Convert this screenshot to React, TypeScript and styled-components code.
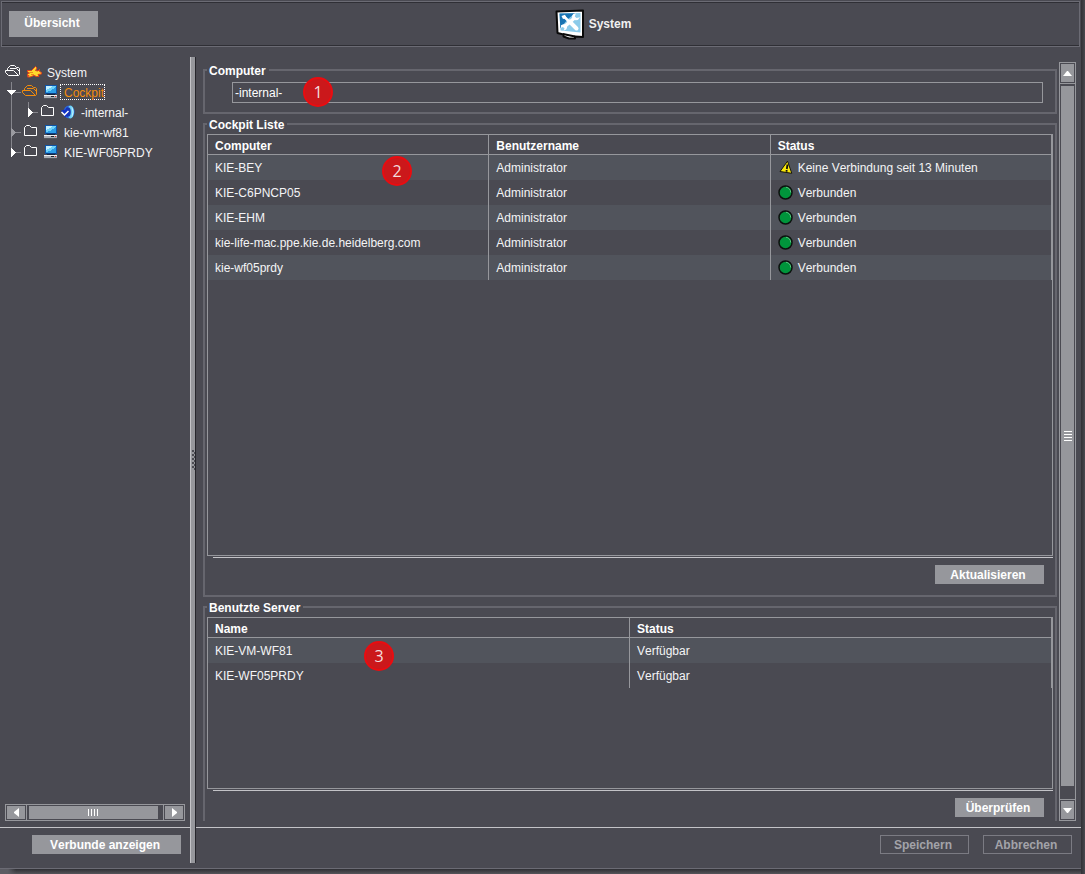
import React from 'react';
import styled, { createGlobalStyle, css } from 'styled-components';

const color = {
  bg: '#4a4a52',
  stripe: '#51545c',
  frame: '#6b6b74',
  line: '#96979c',
  face: '#96979c',
  rule: '#c3c3c7',
  dark: '#2f2f35',
  text: '#ffffff',
  cell: '#f4f4f6',
  active: '#f28c0c',
};

const GlobalStyle = createGlobalStyle`
  *, *::before, *::after { box-sizing: border-box; }
  body {
    margin: 0;
    background: ${color.bg};
    color: ${color.text};
    font: 12px/16px "Liberation Sans", Arial, sans-serif;
    font-kerning: none;
  }
  button, input { font: inherit; color: inherit; }
`;

/* ---------- window frame ---------- */

const Desktop = styled.div`
  display: flex;
  flex-direction: column;
  min-height: 100vh;
  padding-right: 4px;
  background: linear-gradient(to left, #4a4a50 0, #303035 4px, ${color.bg} 4px);
`;

const Header = styled.header`
  display: flex;
  align-items: center;
  gap: 16px;
  height: 46px;
  margin: 1px 1px 0 1px;
  border: 1px solid ${color.frame};
  box-shadow: inset 0 1px 0 ${color.dark}, inset 0 -1px 0 ${color.dark};
  padding: 0 7px;
`;

const Title = styled.h1`
  display: flex;
  align-items: center;
  gap: 4px;
  margin: 0 auto;
  font-size: 12px;
  line-height: 16px;
  color: #f0f0f0;
`;

const Main = styled.main`
  display: flex;
  flex: 1;
`;

const WindowEdge = styled.div`
  height: 6px;
  border-top: 1px solid ${color.frame};
  background: linear-gradient(to right, #5c5c63 8px, transparent 16px),
    linear-gradient(#2f2f34, #55555a);
`;

/* ---------- buttons ---------- */

const Button = styled.button<{ $width: number; $tall?: boolean }>`
  display: block;
  width: ${(p) => p.$width}px;
  height: ${(p) => (p.$tall ? 26 : 19)}px;
  padding: 0 3px 0 0;
  border: 0;
  background: ${color.face};
  color: ${color.text};
  font-weight: bold;
  line-height: 16px;
  ${(p) => p.$tall && 'padding-bottom: 2px;'}

  &:disabled {
    border: 1px solid #7b7b83;
    background: transparent;
    color: #a3a3a9;
  }
`;

/* ---------- left column ---------- */

const Sidebar = styled.aside`
  display: flex;
  flex-direction: column;
  flex: 0 0 190px;
`;

const Tree = styled.div`
  flex: 1;
  padding-top: 15px;
`;

const TreeRow = styled.div<{ $root?: boolean; $active?: boolean }>`
  display: flex;
  align-items: center;
  height: 20px;
  padding-left: ${(p) => (p.$root ? 5 : 0)}px;
  color: ${(p) => (p.$active ? color.active : color.cell)};
`;

const FolderSvg = styled.svg`
  flex: none;
  margin-right: 6px;
`;

const NodeSvg = styled.svg`
  flex: none;
  margin-right: 5px;
`;

const TreeLabel = styled.span<{ $active?: boolean }>`
  height: 16px;
  padding-top: 1px;
  line-height: 16px;
  ${(p) =>
    p.$active &&
    css`
      margin-left: -4px;
      padding: 0 0 0 3px;
      border: 1px dotted #fff;
    `}
`;

const Splitter = styled.div`
  display: flex;
  align-items: center;
  flex: 0 0 6px;
  margin: 10px 0 5px;
  border-left: 1px solid ${color.rule};
  border-right: 1px solid #26262c;
  background: ${color.face};
`;

/* ---------- scroll bars ---------- */

const ScrollBar = styled.div<{ $horizontal?: boolean }>`
  display: flex;
  flex-direction: ${(p) => (p.$horizontal ? 'row' : 'column')};
  border: 1px solid ${color.line};
  ${(p) =>
    p.$horizontal
      ? css`
          height: 17px;
          margin: 0 5px 6px;
        `
      : css`
          flex: 0 0 17px;
        `}
`;

const ScrollButton = styled.button`
  display: flex;
  align-items: center;
  justify-content: center;
  flex: 0 0 20px;
  margin: 0;
  padding: 0;
  border: 1px solid ${color.bg};
  background: ${color.face};
`;

const ScrollTrack = styled.div<{ $horizontal?: boolean }>`
  display: flex;
  flex: 1;
  ${(p) =>
    p.$horizontal
      ? css`
          border: solid ${color.line};
          border-width: 0 1px;
          padding: 1px 5px 1px 2px;
        `
      : css`
          border: solid ${color.line};
          border-width: 1px 0;
          padding: 2px 1px 13px;
        `}
`;

const ScrollThumb = styled.div`
  display: flex;
  align-items: center;
  justify-content: center;
  flex: 1;
  background: ${color.face};
`;

/* ---------- right column ---------- */

const Content = styled.section`
  display: flex;
  flex-direction: column;
  flex: 1;
  min-width: 0;
`;

const Viewport = styled.div`
  display: flex;
  flex: 1;
  gap: 2px;
  padding: 15px 5px 6px 7px;
`;

const Panels = styled.div`
  display: flex;
  flex-direction: column;
  flex: 1;
  gap: 2px;
  min-width: 0;
`;

const Group = styled.fieldset<{ $grow?: boolean; $open?: boolean }>`
  display: flex;
  flex-direction: column;
  flex: ${(p) => (p.$grow ? '1 0 auto' : 'none')};
  min-width: 0;
  margin: 0;
  padding: 2px 2px ${(p) => (p.$open ? 4 : 11)}px;
  border: 2px solid #66666e;
  ${(p) => p.$open && 'border-bottom: 0;'}
`;

const GroupTitle = styled.legend`
  padding: 2px 3px 0 2px;
  font-weight: bold;
  line-height: 14px;
`;

const Field = styled.div`
  position: relative;
  margin: 2px 10px -2px 25px;
`;

const TextBox = styled.input`
  display: block;
  width: 100%;
  height: 21px;
  padding: 0 2px;
  border: 1px solid ${color.line};
  outline: 0;
  background: transparent;
`;

const TableBox = styled.div<{ $grow?: boolean }>`
  ${(p) => (p.$grow ? 'flex: 1 0 180px;' : 'height: 172px;')}
  margin-bottom: 1px;
  border: 1px solid ${color.line};
`;

const Table = styled.table`
  width: 100%;
  table-layout: fixed;
  border-spacing: 0;
`;

const HeadCell = styled.th`
  height: 20px;
  padding: 3px 7px 0;
  border: solid ${color.line};
  border-width: 0 1px 1px 0;
  text-align: left;
`;

const Row = styled.tr`
  &:nth-child(odd) {
    background: ${color.stripe};
  }
`;

const Cell = styled.td`
  position: relative;
  height: 25px;
  padding: 0 7px;
  border-right: 1px solid ${color.line};
  color: ${color.cell};
  white-space: nowrap;
`;

const StatusLine = styled.div`
  display: flex;
  align-items: center;
  gap: 5px;
`;

const Rule = styled.div`
  height: 1px;
  margin-left: 6px;
  background: ${color.rule};
`;

const GroupActions = styled.div`
  display: flex;
  justify-content: flex-end;
  padding: 7px 9px 0 0;
`;

const Footer = styled.footer`
  display: flex;
  justify-content: flex-end;
  gap: 14px;
  padding: 7px 9px 14px;
  border-top: 1px solid ${color.rule};
`;

const Marker = styled.span<{ $left: number; $top: number }>`
  position: absolute;
  left: ${(p) => p.$left}px;
  top: ${(p) => p.$top}px;
  z-index: 1;
  width: 30px;
  height: 30px;
  border: 2px solid #ea0c10;
  border-radius: 50%;
  background: #cb181b;
  color: #f3dede;
  font: 16px/26px "Open Sans", "Noto Sans", sans-serif;
  text-align: center;
`;

/* ---------- drawings ---------- */

const BranchSvg = styled.svg`
  flex: none;
`;

type BranchKind = 'open' | 'child' | 'middle' | 'last';

function Branch({ kind }: { kind: BranchKind }) {
  const child = kind === 'child';
  return (
    <BranchSvg width={child ? 39 : 22} height="20" shapeRendering="crispEdges" aria-hidden="true">
      <path
        d={kind === 'last' ? 'M11.5 0V10' : kind === 'open' ? 'M11.5 -2V20' : 'M11.5 0V20'}
        stroke="#85858c"
      />
      {kind === 'open' && (
        <>
          <path d="M12 10.5H21M28.5 16V20" stroke="#85858c" />
          <path d="M7 8H16V9H15V10H14V11H13V12H12V13H11V12H10V11H9V10H8V9H7Z" fill="#fff" />
        </>
      )}
      {child && (
        <>
          <path d="M28.5 0V10M33 10.5H38" stroke="#85858c" />
          <path d="M28 6V15L33 11V10Z" fill="#fff" />
        </>
      )}
      {(kind === 'middle' || kind === 'last') && (
        <>
          <path d="M16 10.5H21" stroke="#85858c" />
          <path d="M11 6V15L16 11V10Z" fill={kind === 'middle' ? '#9a9aa0' : '#fff'} />
        </>
      )}
    </BranchSvg>
  );
}

function Folder({ open, stroke = '#fff' }: { open?: boolean; stroke?: string }) {
  return (
    <FolderSvg width="16" height="14" viewBox="0 0 16 14" fill="none" stroke={stroke} aria-hidden="true">
      {open ? (
        <path d="M.5 5.500H8.500L13.500 10.500H3.500L.5 7.500ZM2.500 5.500V3.500L5.500 .5H9.500L11.500 2.500H13.500L14.500 3.500V9.500L13.500 10.500M5 3.500H11.500L14 6" />
      ) : (
        <path d="M2.500 10.500V2.500L4.500 .5H7.500L9.500 2.500H14.500V10.500Z" />
      )}
    </FolderSvg>
  );
}

function HandIcon() {
  return (
    <NodeSvg width="15" height="14" viewBox="0 0 15 14" aria-hidden="true">
      <path
        d="M.5 5.500H4.500L8.500 1.500L10 3L8.500 5.500L11 6L12.500 4.500V6.500L14.500 7.500V9L11 9.500L12 11.500H9.500L7 10.500L3 12H.5L2 10.500H.5V9L2.500 8L.5 7Z"
        fill="#ffd92c"
        stroke="#e4411c"
      />
      <path d="M3 7.500H6M4 9.500H7" stroke="#f08a1a" />
    </NodeSvg>
  );
}

function ComputerIcon() {
  return (
    <NodeSvg width="15" height="16" viewBox="0 0 15 16" shapeRendering="crispEdges" aria-hidden="true">
      <path d="M1 1H13V10H1Z" fill="#0f55a8" />
      <path d="M2 2H12V9H2Z" fill="#2c9de6" />
      <path d="M2 2H12L11 4L6 7L2 8Z" fill="#6fd3fa" />
      <path d="M2 2H9L6 4L2 6Z" fill="#c4f0ff" />
      <path d="M2 9H12V10H2Z" fill="#0b3f86" />
      <path d="M3 10H11V11H3Z" fill="#16263f" />
      <path d="M0 11H13V12H0Z" fill="#eef0f2" />
      <path d="M0 12H13V14H0Z" fill="#a9adb4" />
      <path d="M0 14H13V15H0Z" fill="#53575e" />
      <path d="M7 12.500H10" stroke="#22262c" />
      <path d="M11 12.500H12" stroke="#e22222" />
    </NodeSvg>
  );
}

function InternalIcon() {
  return (
    <NodeSvg width="15" height="16" viewBox="0 0 15 16" aria-hidden="true">
      <ellipse cx="8" cy="8" rx="5.500" ry="6.500" fill="#2a63e0" />
      <ellipse cx="9.500" cy="8" rx="3.500" ry="6.500" fill="#6ccff5" />
      <ellipse cx="7" cy="8" rx="2.800" ry="4.800" fill="#1735b0" />
      <path d="M11 3.500Q13 8 11 12.500" stroke="#c8f1ff" fill="none" />
      <path d="M0 6.500L7 5L8 10L4 13.500Z" fill="#1233c4" />
      <path d="M.5 8L3.500 11L7.500 7" stroke="#fff" strokeWidth="1.500" fill="none" />
    </NodeSvg>
  );
}

function SystemIcon() {
  return (
    <svg width="30" height="31" viewBox="0 0 30 31" aria-hidden="true">
      <path
        d="M1.500 2.500L28 1.500V28L20 27.500V29.500H14L8.500 27.500V25.500L2.500 24Z"
        fill="#fff"
        stroke="#0a0a0a"
        strokeWidth="2"
        strokeLinejoin="round"
      />
      <path d="M8 25L20 27.500" stroke="#0a0a0a" strokeWidth="2" />
      <path d="M4.500 4.500L25.500 4V23.500L5.500 21.500Z" fill="#8ccbea" />
      <path d="M4.500 4.500L20 4.200L13 10L5.300 19Z" fill="#1873b2" />
      <path d="M8.500 18.500L19.500 9" stroke="#fff" strokeWidth="3.500" />
      <path
        d="M18.500 4.800Q15.500 8 18.500 10.800Q23 12.500 25 8.200L21.500 9L19.800 7.500L20.800 4.500Z"
        fill="#fff"
      />
      <path d="M6 16.200Q10 13.800 12 17Q12.500 21 8.500 21.500L9.800 19.200L8.500 17.800L6 18.800Z" fill="#fff" />
      <path d="M9 7.500L14 12.500" stroke="#fff" strokeWidth="2.500" />
      <path d="M6.500 7L10 5.800L11.500 9L8 10Z" fill="#fff" />
      <path d="M14.500 12.500L21.500 19.500" stroke="#fff" strokeWidth="4" strokeLinecap="round" />
    </svg>
  );
}

function OkIcon() {
  return (
    <svg width="15" height="15" viewBox="0 0 15 15" aria-hidden="true">
      <circle cx="7.500" cy="7.500" r="6.500" fill="#00953b" stroke="#0c110e" strokeWidth="1.500" />
      <path d="M8 2.200Q12.500 3 12.700 7.500" fill="none" stroke="#5cc283" />
    </svg>
  );
}

function WarnIcon() {
  return (
    <svg width="15" height="15" viewBox="0 0 15 15" aria-hidden="true">
      <path d="M9.500 1.200L13.800 13.300L2 11.500Z" fill="#fbe80a" stroke="#17170c" strokeLinejoin="round" />
      <path d="M9.500 4.500L8.800 9M8.600 10V11.800" stroke="#111" strokeWidth="1.800" />
    </svg>
  );
}

const arrows = {
  up: { w: 9, h: 5, d: 'M0 5L4 0H5L9 5Z' },
  down: { w: 9, h: 5, d: 'M0 0L4 5H5L9 0Z' },
  left: { w: 5, h: 9, d: 'M5 0L0 4V5L5 9Z' },
  right: { w: 5, h: 9, d: 'M0 0L5 4V5L0 9Z' },
};

function Arrow({ to }: { to: keyof typeof arrows }) {
  const a = arrows[to];
  return (
    <svg width={a.w} height={a.h} aria-hidden="true">
      <path d={a.d} fill="#fff" />
    </svg>
  );
}

function SplitterGrip() {
  return (
    <svg width="4" height="20" shapeRendering="crispEdges" aria-hidden="true">
      {[0, 4, 8, 12, 16].map((y) => (
        <path key={y} d={`M1 ${y}h2v2h-2zM3 ${y + 2}h1v2h-1z`} fill="#4a4a51" />
      ))}
    </svg>
  );
}

/* ---------- data ---------- */

const cockpits = [
  { host: 'KIE-BEY', user: 'Administrator', ok: false, status: 'Keine Verbindung seit 13 Minuten' },
  { host: 'KIE-C6PNCP05', user: 'Administrator', ok: true, status: 'Verbunden' },
  { host: 'KIE-EHM', user: 'Administrator', ok: true, status: 'Verbunden' },
  { host: 'kie-life-mac.ppe.kie.de.heidelberg.com', user: 'Administrator', ok: true, status: 'Verbunden' },
  { host: 'kie-wf05prdy', user: 'Administrator', ok: true, status: 'Verbunden' },
];

const servers = [
  { name: 'KIE-VM-WF81', status: 'Verfügbar' },
  { name: 'KIE-WF05PRDY', status: 'Verfügbar' },
];

export default function App() {
  return (
    <>
      <GlobalStyle />
      <Desktop>
        <Header>
          <Button $width={89} $tall>Übersicht</Button>
          <Title>
            <SystemIcon />
            System
          </Title>
        </Header>

        <Main>
          <Sidebar>
            <Tree role="tree" aria-label="System">
              <TreeRow role="treeitem" $root>
                <Folder open />
                <HandIcon />
                <TreeLabel>System</TreeLabel>
              </TreeRow>
              <TreeRow role="treeitem" $active>
                <Branch kind="open" />
                <Folder open stroke={color.active} />
                <ComputerIcon />
                <TreeLabel $active>Cockpit</TreeLabel>
              </TreeRow>
              <TreeRow role="treeitem">
                <Branch kind="child" />
                <Folder />
                <InternalIcon />
                <TreeLabel>-internal-</TreeLabel>
              </TreeRow>
              <TreeRow role="treeitem">
                <Branch kind="middle" />
                <Folder />
                <ComputerIcon />
                <TreeLabel>kie-vm-wf81</TreeLabel>
              </TreeRow>
              <TreeRow role="treeitem">
                <Branch kind="last" />
                <Folder />
                <ComputerIcon />
                <TreeLabel>KIE-WF05PRDY</TreeLabel>
              </TreeRow>
            </Tree>
            <ScrollBar $horizontal>
              <ScrollButton aria-label="Nach links"><Arrow to="left" /></ScrollButton>
              <ScrollTrack $horizontal>
                <ScrollThumb>
                  <svg width="11" height="7" shapeRendering="crispEdges" aria-hidden="true">
                    <path d="M.5 0V7M3.500 0V7M6.500 0V7M9.500 0V7" stroke="#fff" />
                  </svg>
                </ScrollThumb>
              </ScrollTrack>
              <ScrollButton aria-label="Nach rechts"><Arrow to="right" /></ScrollButton>
            </ScrollBar>
            <Footer>
              <Button $width={149}>Verbunde anzeigen</Button>
            </Footer>
          </Sidebar>

          <Splitter>
            <SplitterGrip />
          </Splitter>

          <Content>
            <Viewport>
              <Panels>
                <Group>
                  <GroupTitle id="computer-title">Computer</GroupTitle>
                  <Field>
                    <TextBox aria-labelledby="computer-title" defaultValue="-internal-" />
                    <Marker $left={71} $top={-5}>1</Marker>
                  </Field>
                </Group>

                <Group $grow>
                  <GroupTitle>Cockpit Liste</GroupTitle>
                  <TableBox $grow>
                    <Table>
                      <thead>
                        <tr>
                          <HeadCell>Computer</HeadCell>
                          <HeadCell>Benutzername</HeadCell>
                          <HeadCell>Status</HeadCell>
                        </tr>
                      </thead>
                      <tbody>
                        {cockpits.map((c, i) => (
                          <Row key={c.host}>
                            <Cell>
                              {c.host}
                              {i === 0 && <Marker $left={174} $top={1}>2</Marker>}
                            </Cell>
                            <Cell>{c.user}</Cell>
                            <Cell>
                              <StatusLine>
                                {c.ok ? <OkIcon /> : <WarnIcon />}
                                {c.status}
                              </StatusLine>
                            </Cell>
                          </Row>
                        ))}
                      </tbody>
                    </Table>
                  </TableBox>
                  <Rule />
                  <GroupActions>
                    <Button $width={109}>Aktualisieren</Button>
                  </GroupActions>
                </Group>

                <Group $open>
                  <GroupTitle>Benutzte Server</GroupTitle>
                  <TableBox>
                    <Table>
                      <thead>
                        <tr>
                          <HeadCell>Name</HeadCell>
                          <HeadCell>Status</HeadCell>
                        </tr>
                      </thead>
                      <tbody>
                        {servers.map((s, i) => (
                          <Row key={s.name}>
                            <Cell>
                              {s.name}
                              {i === 0 && <Marker $left={156} $top={3}>3</Marker>}
                            </Cell>
                            <Cell>{s.status}</Cell>
                          </Row>
                        ))}
                      </tbody>
                    </Table>
                  </TableBox>
                  <Rule />
                  <GroupActions>
                    <Button $width={89}>Überprüfen</Button>
                  </GroupActions>
                </Group>
              </Panels>

              <ScrollBar>
                <ScrollButton aria-label="Nach oben"><Arrow to="up" /></ScrollButton>
                <ScrollTrack>
                  <ScrollThumb>
                    <svg width="8" height="11" shapeRendering="crispEdges" aria-hidden="true">
                      <path d="M0 .5H8M0 3.500H8M0 6.500H8M0 9.500H8" stroke="#fff" />
                    </svg>
                  </ScrollThumb>
                </ScrollTrack>
                <ScrollButton aria-label="Nach unten"><Arrow to="down" /></ScrollButton>
              </ScrollBar>
            </Viewport>
            <Footer>
              <Button $width={89} disabled>Speichern</Button>
              <Button $width={89} disabled>Abbrechen</Button>
            </Footer>
          </Content>
        </Main>
        <WindowEdge />
      </Desktop>
    </>
  );
}
